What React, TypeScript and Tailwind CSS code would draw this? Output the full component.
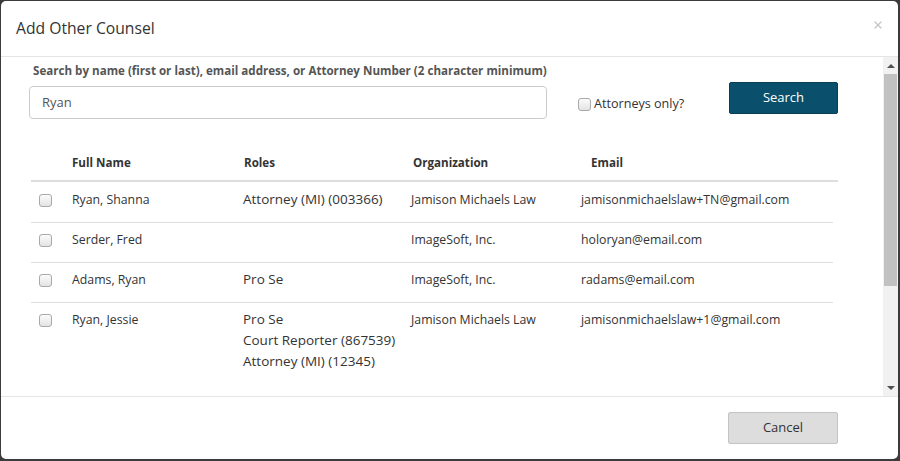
import { X } from "lucide-react";

type Person = {
  name: string;
  roles: string[];
  org: string;
  email: string;
};

const people: Person[] = [
  { name: "Ryan, Shanna", roles: ["Attorney (MI) (003366)"], org: "Jamison Michaels Law", email: "jamisonmichaelslaw+TN@gmail.com" },
  { name: "Serder, Fred", roles: [], org: "ImageSoft, Inc.", email: "holoryan@email.com" },
  { name: "Adams, Ryan", roles: ["Pro Se"], org: "ImageSoft, Inc.", email: "radams@email.com" },
  {
    name: "Ryan, Jessie",
    roles: ["Pro Se", "Court Reporter (867539)", "Attorney (MI) (12345)"],
    org: "Jamison Michaels Law",
    email: "jamisonmichaelslaw+1@gmail.com",
  },
];

function Box() {
  return (
    <div className="w-[13px] h-[13px] rounded-[3px] border border-[#a9a9a9] bg-gradient-to-b from-[#fbfbfb] to-[#e3e3e3]" />
  );
}

function ScrollBar() {
  return (
    <div className="w-[15px] flex flex-col bg-[#f1f1f1]">
      <div className="h-[17px] flex items-center justify-center">
        <div className="w-0 h-0 border-x-[4px] border-x-transparent border-b-[4px] border-b-[#505050]" />
      </div>
      <div className="flex-1 flex flex-col px-px">
        <div className="h-[212px] bg-[#c1c1c1]" />
      </div>
      <div className="h-[17px] flex items-center justify-center">
        <div className="w-0 h-0 border-x-[4px] border-x-transparent border-t-[4px] border-t-[#505050]" />
      </div>
    </div>
  );
}

const cols = "grid grid-cols-[41px_172px_167px_170px_1fr]";

export default function App() {
  return (
    <div
      className="w-[900px] h-[461px] bg-[#3b3b3b] pl-px pr-[2px] pt-px pb-[2px] text-[#333]"
      style={{ fontFamily: '"Open Sans", "Noto Sans", sans-serif' }}
    >
      <div className="h-full bg-white rounded-[5px] flex flex-col overflow-hidden">
        {/* Header */}
        <div className="h-[56px] shrink-0 border-b border-[#e5e5e5] flex items-center justify-between pl-[15px] pr-[14px]">
          <h4 className="text-[15.7px] text-[#333]">Add Other Counsel</h4>
          <X className="w-[12px] h-[12px] text-[#c4c4c4] -mt-[8px]" strokeWidth={2.5} />
        </div>

        {/* Body */}
        <div className="flex-1 flex min-h-0 border-b border-[#e5e5e5]">
          <div className="flex-1 overflow-hidden pl-[28px] pr-[45px] pt-[5px]">
            <div className="text-[11.6px] font-bold text-[#555] pl-[4px] leading-[18px]">
              Search by name (first or last), email address, or Attorney Number (2 character minimum)
            </div>
            <div className="flex items-start mt-[6px]">
              <div className="w-[518px] h-[33px] rounded-[4px] border border-[#ccc] flex items-center pl-[12px] text-[13px] text-[#555]">
                Ryan
              </div>
              <div className="flex items-center gap-[3px] ml-[31px] mt-[9px]">
                <Box />
                <span className="text-[12.6px] text-[#333]">Attorneys only?</span>
              </div>
              <button className="ml-auto -mt-[4px] w-[109px] h-[32px] bg-[#0a4f6b] border border-[#083f56] rounded-[2px] text-white text-[13px]">
                Search
              </button>
            </div>

            {/* Table */}
            <div className="mt-[34px] ml-[2px]">
              <div className={`${cols} border-b-2 border-[#ddd] pb-[7px] text-[11.6px] font-bold leading-[20px]`}>
                <div />
                <div>Full Name</div>
                <div>Roles</div>
                <div className="pl-[2px]">Organization</div>
                <div className="pl-[10px]">Email</div>
              </div>
              {people.map((p, i) => (
                <div
                  key={p.name}
                  className={`${cols} mr-[5px] text-[12.3px] leading-[21px] ${i === 0 ? "pt-[7px]" : "pt-[6px]"} ${i < people.length - 1 ? "pb-[12px] border-b border-[#ddd]" : "pb-[20px]"}`}
                >
                  <div className="pl-[8px] pt-[5px]">
                    <Box />
                  </div>
                  <div>{p.name}</div>
                  <div className="text-[13.5px] -ml-px">
                    {p.roles.map((r) => (
                      <div key={r}>{r}</div>
                    ))}
                  </div>
                  <div>{p.org}</div>
                  <div>{p.email}</div>
                </div>
              ))}
            </div>
          </div>
          <ScrollBar />
        </div>

        {/* Footer */}
        <div className="h-[62px] shrink-0 flex items-center justify-end pr-[60px]">
          <button className="w-[110px] h-[32px] bg-[#dddddd] border border-[#c4c4c4] rounded-[2px] text-[13px] text-[#333]">
            Cancel
          </button>
        </div>
      </div>
    </div>
  );
}
